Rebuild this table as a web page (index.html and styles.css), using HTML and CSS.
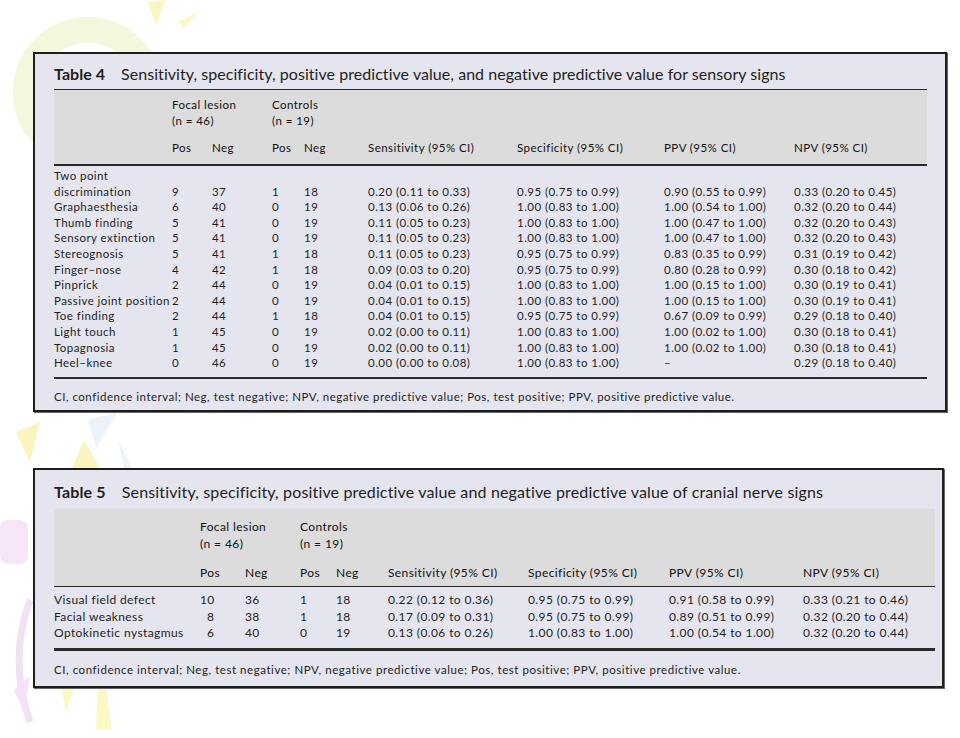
FILE: index.html
```html
<!DOCTYPE html>
<html>
<head>
<meta charset="utf-8">
<link rel="stylesheet" href="styles.css">
</head>
<body>
<svg class="deco" width="960" height="738" viewBox="0 0 960 738">
  <circle cx="88" cy="92" r="62" fill="none" stroke="#f3f8dc" stroke-width="26"/>
  <polygon points="148,2 166,0 156,26" fill="#faf6c4"/>
  <polygon points="178,22 198,12 184,28" fill="#faf6c4"/>
  <polygon points="16,432 40,422 30,462" fill="#faf5c0"/>
  <polygon points="88,420 118,412 96,448" fill="#edf3fb"/>
  <polygon points="84,440 100,468 72,468" fill="#faf5c0"/>
  <polygon points="118,440 132,468 124,468" fill="#edf3fb"/>
  <rect x="0" y="520" width="28" height="44" rx="8" fill="#f6e6f8"/>
  <path d="M30 600 Q8 660 30 722" fill="none" stroke="#f2e0f6" stroke-width="7"/>
  <polygon points="14,690 30,676 24,712" fill="#f3e2f8"/>
  <polygon points="62,690 74,688 66,712" fill="#fcf8c6"/>
  <polygon points="98,686 106,688 112,730 96,730" fill="#fcf8c6"/>
</svg>
<div class="page">
  <section class="box t4">
    <h2 class="title"><b>Table 4</b>Sensitivity, specificity, positive predictive value, and negative predictive value for sensory signs</h2>
    <table class="data">
      <colgroup>
        <col style="width:118px"><col style="width:40px"><col style="width:60px"><col style="width:32px"><col style="width:64px"><col style="width:149px"><col style="width:147px"><col style="width:130px"><col style="width:133px">
      </colgroup>
      <thead>
        <tr class="ha"><th></th><th colspan="2">Focal lesion<br>(n = 46)</th><th colspan="2">Controls<br>(n = 19)</th><th></th><th></th><th></th><th></th></tr>
        <tr class="hb"><th></th><th>Pos</th><th>Neg</th><th>Pos</th><th>Neg</th><th>Sensitivity (95% CI)</th><th>Specificity (95% CI)</th><th>PPV (95% CI)</th><th>NPV (95% CI)</th></tr>
      </thead>
      <tbody>
        <tr class="first"><td>Two point<br>discrimination</td><td>9</td><td>37</td><td>1</td><td>18</td><td>0.20 (0.11 to 0.33)</td><td>0.95 (0.75 to 0.99)</td><td>0.90 (0.55 to 0.99)</td><td>0.33 (0.20 to 0.45)</td></tr>
        <tr><td>Graphaesthesia</td><td>6</td><td>40</td><td>0</td><td>19</td><td>0.13 (0.06 to 0.26)</td><td>1.00 (0.83 to 1.00)</td><td>1.00 (0.54 to 1.00)</td><td>0.32 (0.20 to 0.44)</td></tr>
        <tr><td>Thumb finding</td><td>5</td><td>41</td><td>0</td><td>19</td><td>0.11 (0.05 to 0.23)</td><td>1.00 (0.83 to 1.00)</td><td>1.00 (0.47 to 1.00)</td><td>0.32 (0.20 to 0.43)</td></tr>
        <tr><td>Sensory extinction</td><td>5</td><td>41</td><td>0</td><td>19</td><td>0.11 (0.05 to 0.23)</td><td>1.00 (0.83 to 1.00)</td><td>1.00 (0.47 to 1.00)</td><td>0.32 (0.20 to 0.43)</td></tr>
        <tr><td>Stereognosis</td><td>5</td><td>41</td><td>1</td><td>18</td><td>0.11 (0.05 to 0.23)</td><td>0.95 (0.75 to 0.99)</td><td>0.83 (0.35 to 0.99)</td><td>0.31 (0.19 to 0.42)</td></tr>
        <tr><td>Finger–nose</td><td>4</td><td>42</td><td>1</td><td>18</td><td>0.09 (0.03 to 0.20)</td><td>0.95 (0.75 to 0.99)</td><td>0.80 (0.28 to 0.99)</td><td>0.30 (0.18 to 0.42)</td></tr>
        <tr><td>Pinprick</td><td>2</td><td>44</td><td>0</td><td>19</td><td>0.04 (0.01 to 0.15)</td><td>1.00 (0.83 to 1.00)</td><td>1.00 (0.15 to 1.00)</td><td>0.30 (0.19 to 0.41)</td></tr>
        <tr><td>Passive joint position</td><td>2</td><td>44</td><td>0</td><td>19</td><td>0.04 (0.01 to 0.15)</td><td>1.00 (0.83 to 1.00)</td><td>1.00 (0.15 to 1.00)</td><td>0.30 (0.19 to 0.41)</td></tr>
        <tr><td>Toe finding</td><td>2</td><td>44</td><td>1</td><td>18</td><td>0.04 (0.01 to 0.15)</td><td>0.95 (0.75 to 0.99)</td><td>0.67 (0.09 to 0.99)</td><td>0.29 (0.18 to 0.40)</td></tr>
        <tr><td>Light touch</td><td>1</td><td>45</td><td>0</td><td>19</td><td>0.02 (0.00 to 0.11)</td><td>1.00 (0.83 to 1.00)</td><td>1.00 (0.02 to 1.00)</td><td>0.30 (0.18 to 0.41)</td></tr>
        <tr><td>Topagnosia</td><td>1</td><td>45</td><td>0</td><td>19</td><td>0.02 (0.00 to 0.11)</td><td>1.00 (0.83 to 1.00)</td><td>1.00 (0.02 to 1.00)</td><td>0.30 (0.18 to 0.41)</td></tr>
        <tr class="last"><td>Heel–knee</td><td>0</td><td>46</td><td>0</td><td>19</td><td>0.00 (0.00 to 0.08)</td><td>1.00 (0.83 to 1.00)</td><td>–</td><td>0.29 (0.18 to 0.40)</td></tr>
      </tbody>
    </table>
    <p class="note">CI, confidence interval; Neg, test negative; NPV, negative predictive value; Pos, test positive; PPV, positive predictive value.</p>
  </section>

  <section class="box t5">
    <h2 class="title"><b>Table 5</b>Sensitivity, specificity, positive predictive value and negative predictive value of cranial nerve signs</h2>
    <table class="data">
      <colgroup>
        <col style="width:146px"><col style="width:45px"><col style="width:55px"><col style="width:36px"><col style="width:52px"><col style="width:140px"><col style="width:141px"><col style="width:134px"><col style="width:132px">
      </colgroup>
      <thead>
        <tr class="ha"><th></th><th colspan="2">Focal lesion<br>(n = 46)</th><th colspan="2">Controls<br>(n = 19)</th><th></th><th></th><th></th><th></th></tr>
        <tr class="hb"><th></th><th>Pos</th><th>Neg</th><th>Pos</th><th>Neg</th><th>Sensitivity (95% CI)</th><th>Specificity (95% CI)</th><th>PPV (95% CI)</th><th>NPV (95% CI)</th></tr>
      </thead>
      <tbody>
        <tr class="first"><td>Visual field defect</td><td>10</td><td>36</td><td>1</td><td>18</td><td>0.22 (0.12 to 0.36)</td><td>0.95 (0.75 to 0.99)</td><td>0.91 (0.58 to 0.99)</td><td>0.33 (0.21 to 0.46)</td></tr>
        <tr><td>Facial weakness</td><td class="one">8</td><td>38</td><td>1</td><td>18</td><td>0.17 (0.09 to 0.31)</td><td>0.95 (0.75 to 0.99)</td><td>0.89 (0.51 to 0.99)</td><td>0.32 (0.20 to 0.44)</td></tr>
        <tr class="last"><td>Optokinetic nystagmus</td><td class="one">6</td><td>40</td><td>0</td><td>19</td><td>0.13 (0.06 to 0.26)</td><td>1.00 (0.83 to 1.00)</td><td>1.00 (0.54 to 1.00)</td><td>0.32 (0.20 to 0.44)</td></tr>
      </tbody>
    </table>
    <p class="note">CI, confidence interval; Neg, test negative; NPV, negative predictive value; Pos, test positive; PPV, positive predictive value.</p>
  </section>
</div>
</body>
</html>
```
FILE: styles.css
```css
* { box-sizing: border-box; margin: 0; padding: 0; }
html, body { background: #ffffff; }
body {
  width: 960px;
  height: 738px;
  position: relative;
  overflow: hidden;
  font-family: Lato, "Liberation Sans", sans-serif;
  color: #231f20;
}
.deco { position: absolute; left: 0; top: 0; z-index: 0; }
.page { position: relative; z-index: 1; padding: 52px 0 0 33px; }

.box {
  background: #e5e5ef;
  border: 2px solid #1e1e1e;
  box-shadow: 1px 1px 0 #666;
}
.t4 { width: 914px; height: 360px; padding: 10px 20px 0 19px; }
.t5 { width: 911px; height: 220px; margin-top: 56px; padding: 12px 20px 0 19px; }

.title {
  font-size: 16px;
  line-height: 20px;
  font-weight: 400;
  white-space: nowrap;
  letter-spacing: 0.05px;
}
.t5 .title { letter-spacing: 0.15px; }
.title b { font-weight: 700; margin-right: 16px; }

.data {
  border-collapse: collapse;
  table-layout: fixed;
  font-size: 11.5px;
  letter-spacing: 0.45px;
  text-align: left;
}
.t4 .data { width: 873px; margin-top: 5px; border-top: 1.5px solid #2a2a2a; }
.t5 .data { width: 881px; margin-top: 7px; }

.data th { font-weight: 400; color: #111; text-align: left; padding: 0; vertical-align: top; white-space: nowrap; }
.data thead tr { background: #dcdcdc; }
.data td { padding: 0; vertical-align: bottom; white-space: nowrap; }

.t4 .ha th { padding-top: 7px; line-height: 16px; }
.t4 .hb th { padding-top: 11px; padding-bottom: 8px; line-height: 16px; border-bottom: 2px solid #2a2a2a; }
.t4 td { line-height: 15.6px; }
.t4 .first td { padding-top: 2px; }
.t4 .last td { padding-bottom: 6px; border-bottom: 2px solid #2a2a2a; }

.t5 .data { font-size: 12px; letter-spacing: 0.4px; }
.t5 .ha th { padding-top: 9px; line-height: 17px; }
.t5 .hb th { padding-top: 13px; padding-bottom: 5px; line-height: 16px; border-bottom: 1.5px solid #2a2a2a; }
.t5 td { line-height: 16.5px; }
.t5 .first td { padding-top: 5px; }
.t5 .last td { padding-bottom: 6px; border-bottom: 3px solid #2a2a2a; }
.one { padding-left: 7px !important; }

.note { font-size: 11.5px; line-height: 16px; letter-spacing: 0.5px; }
.t4 .note { margin-top: 10px; }
.t5 .note { margin-top: 11px; letter-spacing: 0.55px; }
```
